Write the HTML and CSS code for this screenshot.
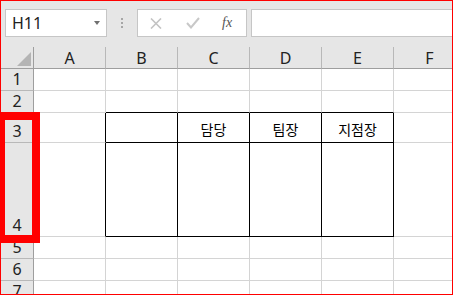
FILE: index.html
```html
<!DOCTYPE html>
<html lang="ko">
<head>
  <meta charset="UTF-8">
  <title>Sheet</title>
  <link rel="stylesheet" href="styles.css">
</head>
<body>
  <div class="window">
    <div class="formula-bar">
      <div class="name-box">H11<span class="caret"></span></div>
      <div class="grip"><span></span><span></span><span></span></div>
      <div class="fx-buttons">
        <svg class="icon-cancel" width="12" height="11" viewBox="0 0 12 11">
          <path d="M1 0.5 L11 10.5 M11 0.5 L1 10.5" stroke="#c3c3c3" stroke-width="1.6" fill="none"/>
        </svg>
        <svg class="icon-enter" width="14" height="12" viewBox="0 0 14 12">
          <path d="M1 6 L5 10.5 L13 1" stroke="#c8c8c8" stroke-width="2" fill="none"/>
        </svg>
        <span class="fx">fx</span>
      </div>
      <div class="formula-input"></div>
    </div>

    <div class="sheet">
      <div class="corner"><span class="select-all"></span></div>
      <div class="ch">A</div>
      <div class="ch">B</div>
      <div class="ch">C</div>
      <div class="ch">D</div>
      <div class="ch">E</div>
      <div class="ch">F</div>

      <div class="rh">1</div>
      <div class="c"></div><div class="c"></div><div class="c"></div>
      <div class="c"></div><div class="c"></div><div class="c"></div>

      <div class="rh">2</div>
      <div class="c"></div>
      <div class="c bb"></div><div class="c bb"></div><div class="c bb"></div><div class="c bb"></div>
      <div class="c"></div>

      <div class="rh">3</div>
      <div class="c br"></div>
      <div class="c br bb"></div>
      <div class="c br bb label">담당</div>
      <div class="c br bb label">팀장</div>
      <div class="c br bb label">지점장</div>
      <div class="c"></div>

      <div class="rh">4</div>
      <div class="c br"></div>
      <div class="c br bb"></div><div class="c br bb"></div><div class="c br bb"></div><div class="c br bb"></div>
      <div class="c"></div>

      <div class="rh">5</div>
      <div class="c"></div><div class="c"></div><div class="c"></div>
      <div class="c"></div><div class="c"></div><div class="c"></div>

      <div class="rh">6</div>
      <div class="c"></div><div class="c"></div><div class="c"></div>
      <div class="c"></div><div class="c"></div><div class="c"></div>

      <div class="rh">7</div>
      <div class="c"></div><div class="c"></div><div class="c"></div>
      <div class="c"></div><div class="c"></div><div class="c"></div>
    </div>

    <!-- red mark round rows 3-4 -->
    <div class="highlight"></div>
  </div>
</body>
</html>
```

FILE: styles.css
```css
* {
  box-sizing: border-box;
}

body {
  margin: 0;
  font-family: "Noto Sans", "Noto Sans CJK KR", sans-serif;
  color: #222;
}

.window {
  position: relative;
  width: 453px;
  height: 295px;
  border: 1px solid #ff0000;
  background-color: #e6e6e6;
  overflow: hidden;
  display: flex;
  flex-direction: column;
}

/* formula bar */
.formula-bar {
  height: 46px;
  flex: none;
  display: flex;
  align-items: flex-start;
  padding: 8px 0 0 4px;
}

.name-box {
  width: 102px;
  height: 28px;
  background-color: #ffffff;
  border: 1px solid #c6c6c6;
  display: flex;
  align-items: center;
  justify-content: space-between;
  padding: 0 6px 0 6px;
  font-size: 16px;
  color: #222;
}

.caret {
  width: 0;
  height: 0;
  border-left: 3.5px solid transparent;
  border-right: 3.5px solid transparent;
  border-top: 4px solid #707070;
}

.grip {
  width: 30px;
  height: 28px;
  display: flex;
  flex-direction: column;
  align-items: center;
  justify-content: center;
  gap: 2px;
}

.grip span {
  width: 2px;
  height: 2px;
  background-color: #a6a6a6;
}

.fx-buttons {
  width: 110px;
  height: 28px;
  background-color: #ffffff;
  border: 1px solid #c6c6c6;
  display: flex;
  align-items: center;
  padding-left: 12px;
}

.icon-enter {
  margin-left: 24px;
}

.fx {
  margin-left: 22px;
  font-family: "Liberation Serif", serif;
  font-style: italic;
  font-size: 14px;
  color: #555;
}

.formula-input {
  flex: 1;
  height: 28px;
  margin-left: 4px;
  background-color: #ffffff;
  border: 1px solid #c6c6c6;
  border-right: none;
}

/* grid */
.sheet {
  flex: none;
  display: grid;
  grid-template-columns: 33px repeat(6, 72px);
  grid-template-rows: 22px 22px 22px 30px 94px 22px 22px 22px;
  background-color: #ffffff;
}

.corner {
  background-color: #e6e6e6;
  border-right: 1px solid #9e9e9e;
  border-bottom: 1px solid #9e9e9e;
  display: flex;
  align-items: flex-end;
  justify-content: flex-end;
  padding: 0 2px 2px 0;
}

.select-all {
  width: 0;
  height: 0;
  border-left: 14px solid transparent;
  border-bottom: 14px solid #b4b4b4;
}

.ch {
  background-color: #e6e6e6;
  border-right: 1px solid #b8b8b8;
  border-bottom: 1px solid #9e9e9e;
  display: flex;
  align-items: center;
  justify-content: center;
  font-size: 16px;
}

.rh {
  background-color: #e6e6e6;
  border-right: 1px solid #9e9e9e;
  border-bottom: 1px solid #b8b8b8;
  display: flex;
  align-items: flex-end;
  justify-content: center;
  font-size: 16px;
  line-height: 21px;
}

.c {
  border-right: 1px solid #d4d4d4;
  border-bottom: 1px solid #d4d4d4;
}

.c.br {
  border-right-color: #000000;
}

.c.bb {
  border-bottom-color: #000000;
}

.label {
  display: flex;
  align-items: flex-end;
  justify-content: center;
  padding-bottom: 3px;
  font-family: "Noto Sans CJK KR", sans-serif;
  font-size: 14px;
  line-height: 20px;
  color: #000;
}

.highlight {
  position: absolute;
  left: -4px;
  top: 111px;
  width: 43px;
  height: 131px;
  border: 8px solid #ff0000;
}
```
